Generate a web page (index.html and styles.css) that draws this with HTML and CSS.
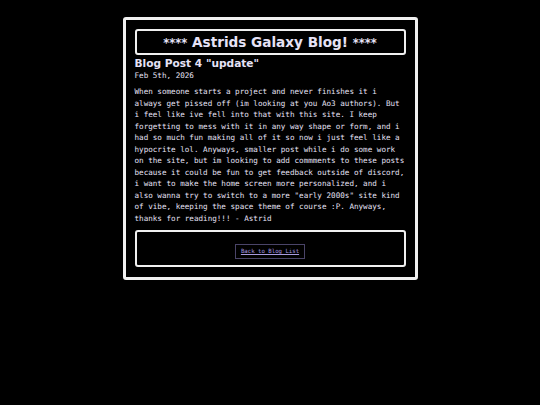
FILE: index.html
```html
<!DOCTYPE html>
<html>
<head>
<meta charset="utf-8">
<link rel="stylesheet" href="styles.css">
</head>
<body>
<div class="frame">
  <header class="banner"><h1 class="site-title"><span class="stars">****</span> Astrids Galaxy Blog! <span class="stars">****</span></h1></header>
  <h2 class="post-title">Blog Post 4 "update"</h2>
  <div class="post-date">Feb 5th, 2026</div>
  <p class="post-body">When someone starts a project and never finishes it i always get pissed off (im looking at you Ao3 authors). But i feel like ive fell into that with this site. I keep forgetting to mess with it in any way shape or form, and i had so much fun making all of it so now i just feel like a hypocrite lol. Anyways, smaller post while i do some work on the site, but im looking to add commments to these posts because it could be fun to get feedback outside of discord, i want to make the home screen more personalized, and i also wanna try to switch to a more "early 2000s" site kind of vibe, keeping the space theme of course :P. Anyways, thanks for reading!!! - Astrid</p>
  <footer class="post-footer"><a class="back-link" href="#">Back to Blog List</a></footer>
</div>
</body>
</html>
```
FILE: styles.css
```css
html, body {
  margin: 0;
  padding: 0;
  background: #000;
}
body {
  color: #e6e2f6;
  font-family: "DejaVu Sans", sans-serif;
}
.frame {
  box-sizing: border-box;
  width: 295px;
  margin: 17px auto 0;
  border: 3px solid #f0f0f0;
  border-radius: 3px;
  padding: 9px 9px 10px;
}
.banner {
  box-sizing: border-box;
  height: 26px;
  border: 2px solid #f0f0f0;
  border-radius: 3px;
  display: flex;
  align-items: center;
  justify-content: center;
}
.site-title {
  margin: 0;
  font-size: 13.6px;
  font-weight: bold;
  line-height: 20px;
  color: #e6e2f6;
}
.stars {
  font-size: 11.5px;
}
.post-title {
  margin: 1px 0 0;
  font-size: 10.6px;
  font-weight: bold;
  line-height: 14px;
}
.post-date {
  font-family: "DejaVu Sans Mono", monospace;
  font-size: 7.6px;
  line-height: 11px;
}
.post-body {
  margin: 5px 0 0;
  font-family: "DejaVu Sans Mono", monospace;
  font-size: 7.6px;
  line-height: 11.5px;
}
.post-footer {
  box-sizing: border-box;
  margin-top: 6px;
  height: 37px;
  border: 2px solid #f0f0f0;
  border-radius: 3px;
  display: flex;
  justify-content: center;
  align-items: flex-start;
  padding-top: 12px;
}
.back-link {
  display: block;
  box-sizing: border-box;
  height: 15px;
  padding: 0 5px;
  border: 1px solid #4a4468;
  font-family: "DejaVu Sans Mono", monospace;
  font-size: 5.7px;
  line-height: 13px;
  color: #a89ae0;
  text-decoration: underline;
}
```
